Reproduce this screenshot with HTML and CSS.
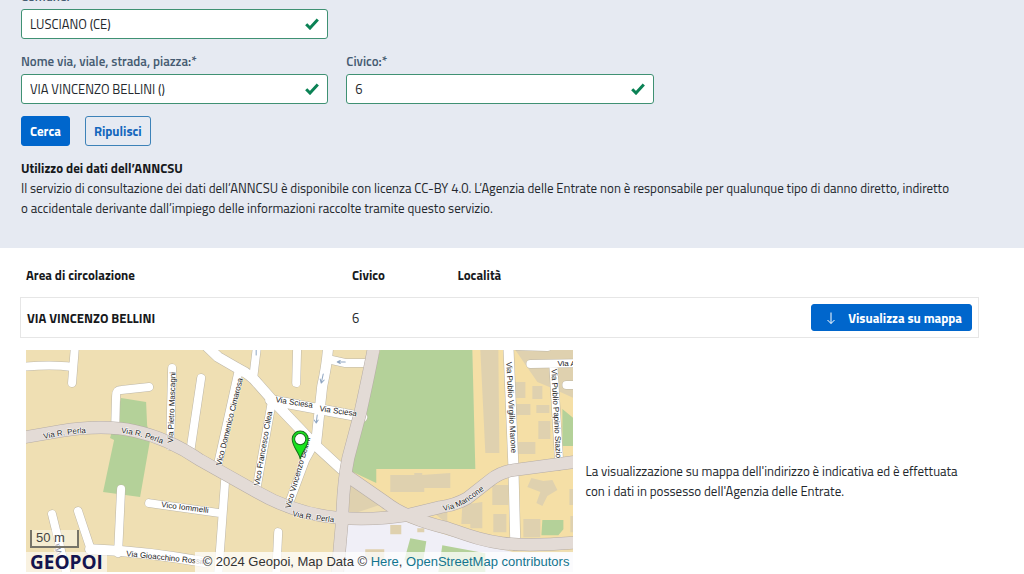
FILE: index.html
```html
<!DOCTYPE html>
<html lang="it">
<head>
<meta charset="utf-8">
<meta name="viewport" content="width=device-width, initial-scale=1">
<title>Consultazione ANNCSU</title>
<link rel="stylesheet" href="styles.css">
</head>
<body>
<section class="search">
  <form class="search-form">
    <div class="fields">
      <div class="field field-first">
        <label for="comune">Comune:*</label>
        <input id="comune" type="text" value="LUSCIANO (CE)">
        <svg class="check" viewBox="0 0 14 12" aria-hidden="true"><path d="M1.2 6.2 5 10 12.8 1.500"/></svg>
      </div>
      <div class="field">
        <label for="via">Nome via, viale, strada, piazza:*</label>
        <input id="via" type="text" value="VIA VINCENZO BELLINI ()">
        <svg class="check" viewBox="0 0 14 12" aria-hidden="true"><path d="M1.2 6.2 5 10 12.8 1.500"/></svg>
      </div>
      <div class="field">
        <label for="civico">Civico:*</label>
        <input id="civico" type="text" value="6">
        <svg class="check" viewBox="0 0 14 12" aria-hidden="true"><path d="M1.2 6.2 5 10 12.8 1.500"/></svg>
      </div>
    </div>
    <div class="actions">
      <button class="btn btn-primary" type="button">Cerca</button>
      <button class="btn btn-outline" type="button">Ripulisci</button>
    </div>
  </form>
  <h2 class="notice-title">Utilizzo dei dati dell’ANNCSU</h2>
  <p class="notice">Il servizio di consultazione dei dati dell’ANNCSU è disponibile con licenza CC-BY 4.0. L’Agenzia delle Entrate non è responsabile per qualunque tipo di danno diretto, indiretto o&nbsp;accidentale derivante dall’impiego delle informazioni raccolte tramite questo servizio.</p>
</section>

<main class="results">
  <table class="table">
    <thead>
      <tr><th class="col-area">Area di circolazione</th><th class="col-num">Civico</th><th class="col-loc">Località</th><td></td></tr>
    </thead>
    <tbody>
      <tr>
        <th scope="row">VIA VINCENZO BELLINI</th><td>6</td><td></td>
        <td class="cell-action">
          <button class="btn btn-primary btn-map" type="button">
            <svg class="arrow" viewBox="0 0 10 12" aria-hidden="true"><path d="M5 .5v11M1.5 8 5 11.5 8.5 8"/></svg>
            Visualizza su mappa
          </button>
        </td>
      </tr>
    </tbody>
  </table>

  <div class="map-row">
    <div class="map-col">
      <div class="map">
        <svg class="map-art" viewBox="26 350 547 222" role="img" aria-label="Mappa di Via Vincenzo Bellini">
          <defs>
            <g id="lanes">
              <path d="M20 367Q52 364 72 367M75 345 72 383M149 387 121 390Q116 390 116 396L115 430M172 368 170 446M201 378 190 452"/>
              <path d="M257 345 253 378M297 345 296 383M327 359 345 363 368 363M238 373 217 468M272 400 256 490M315 442 305 460 287 508"/>
              <path d="M52 514 67 575M78 511 91 550M121 489 118 553M149 503 220 513M225 480 218 575M278 532 276 575"/>
              <path d="M530 364 580 363M553 366 559 466M566 385H580M516 346 547 347"/>
            </g>
            <g id="streets">
              <path d="M200 340 218 357 237 368Q250 374 258 384L273 401 315 445 350 477M328 345Q327 364 322 386L316 442M270 400 362 417"/>
              <path d="M90 549Q145 551 205 562M508 345 513 465 515 545"/>
            </g>
            <g id="roads">
              <path d="M20 438 60 431Q104 424 135 431 168 438 200 460L257 492Q295 514 340 518 378 520 407 515L440 507Q455 505 467 498L490 480Q500 472 513 470L580 461"/>
              <path d="M374 345Q371 363 360 413L348 458Q343 482 342 519L337 575M346 475 385 502Q405 518 447 528C485 541 500 549 580 542"/>
            </g>
            <path id="perla-a" d="M44 439Q65 434 95 432"/>
            <path id="perla-b" d="M121 433Q143 435 172 448"/>
            <path id="perla-c" d="M292 516Q315 521 345 523"/>
            <path id="mancone" d="M443 511Q458 508 467 502L495 482"/>
          </defs>
          <path fill="#efdfb3" d="M26 350H573V572H26z"/>
          <path fill="#f5dfa6" d="M472 350H573V550H510L400 518 350 475V469H475z"/>
          <path fill="#b4d199" d="M380 350H472L475 469H376V483L344 468zM121 398 146 402 147 425 150 440 140 497 103 492 114 440 110 438 115 420z"/>
          <path fill="#f0eff7" d="M345 523 400 520 447 535 513 552H573V572H340z"/>
          <path fill="#dfd1af" d="M350 478 385 503 352 514 347 510zM480 350H498L499 453H485zM515 350H573V398L549 387 537 382zM514 382H525V398H514zM532 386H542V399H532zM516 404H530V415H516zM536 405H549V413H536zM538 421H550V439H538zM517 442H535V454H517zM390 475H414V473H422V475L450 473V488H424V492H390zM492 485H508V505H492zM493 514H506V532H493zM462 505 482 502V528H470V524H461zM523 519H540V537H523zM531 478 543 481 552 480 557 490 547 496 542 506 536 503 540 492 527 487zM569 489H573V505H569zM570 516H573V532H570zM435 514 447 512V524zM390 525H401V534H390zM417 528H424V532H417zM365 549H384V560H365zM538 350H565V360H538z"/>
          <path fill="#b4d199" d="M562 409 573 418V446H562zM542 520H563V529L558 535H541zM410 538 426 541 423 560H404zM442 545 485 553V572H438z"/>
          <g class="street-shape">
            <use href="#lanes" class="lane-edge"/><use href="#streets" class="street-edge"/>
            <use href="#lanes" class="lane-fill"/><use href="#streets" class="street-fill"/>
            <use href="#roads" class="road-edge"/><use href="#roads" class="road-fill"/>
            <path class="direction" d="M337 362H345M337 362 340 360.500M337 362 340 363.500M323 374 321 383M321 383 320 379M321 383 324 380M317 415 316 423M316 423 314 420M316 423 318 420M256 350V355"/>
          </g>
          <g class="map-label">
            <text><textPath href="#perla-a">Via R. Perla</textPath></text>
            <text><textPath href="#perla-b">Via R. Perla</textPath></text>
            <text><textPath href="#perla-c">Via R. Perla</textPath></text>
            <text><textPath href="#mancone">Via Mancone</textPath></text>
            <text transform="translate(173 443)rotate(-88)">Via Pietro Mascagni</text>
            <text transform="translate(221 466)rotate(-76)">Vico Domenico Cimarosa</text>
            <text transform="translate(259 486)rotate(-80)">Vico Francesco Cilea</text>
            <text transform="translate(290 509)rotate(-74)">Vico Vincenzo Bellini</text>
            <text transform="translate(275 402)rotate(9)">Via Sciesa</text>
            <text transform="translate(319 411)rotate(8)">Via Sciesa</text>
            <text transform="translate(506 362)rotate(87)">Via Publio Virgilio Marone</text>
            <text transform="translate(551 369)rotate(87)">Via Publio Papinio Stazio</text>
            <text transform="translate(557 366)">Via A</text>
            <text transform="translate(161 507)rotate(7)">Vico Iommelli</text>
            <text transform="translate(126 556)rotate(6)">Via Gioacchino Rossini</text>
            <text transform="translate(62 554)rotate(-105)" class="faint-label">Via</text>
          </g>
          <path fill="#19e51e" stroke="#16701b" d="M300 459C299 452 292 447 292 439A8 8 0 0 1 308 439C308 447 301 452 300 459z"/>
          <circle cx="300" cy="439" r="5.600" fill="#fff" stroke="#16701b"/>
        </svg>
        <div class="scale">50 m</div>
        <div class="brand">GEOPOI</div>
        <div class="credits">© 2024 Geopoi, Map Data © <a href="#here">Here</a>, <a href="#osm">OpenStreetMap contributors</a></div>
      </div>
    </div>
    <p class="map-note">La visualizzazione su mappa dell'indirizzo è indicativa ed è effettuata con i dati in possesso dell'Agenzia delle Entrate.</p>
  </div>
</main>
</body>
</html>
```
FILE: styles.css
```css
* { box-sizing: border-box; }
body {
  margin: 0;
  background: #fff;
  color: #24282d;
  font: 13px/20px "Titillium Web", Roboto, sans-serif;
  overflow: hidden;
}
.search {
  margin-top: -14px;
  padding: 0 45px 30px 21px;
  background: #e6eaf2;
}
.fields {
  display: grid;
  grid-template-columns: repeat(3, 1fr);
  gap: 12px 18px;
}
.field {
  position: relative;
  display: grid;
  gap: 3px;
}
.field-first { grid-column: 1; }
.field-first + .field { grid-column: 1; }
.field label { color: #455b71; font-weight: 600; }
.field input {
  width: 100%;
  height: 30px;
  padding: 0 32px 0 8px;
  border: 1px solid #3f9173;
  border-radius: 3px;
  background: #fff;
  color: #24282d;
  font: inherit;
}
.check {
  position: absolute;
  right: 9px;
  bottom: 9px;
  width: 14px;
  height: 12px;
  fill: none;
  stroke: #0b8255;
  stroke-width: 3;
}
.actions { display: flex; gap: 15px; margin-top: 12px; }
.btn {
  height: 30px;
  padding: 0 8px;
  border: 1px solid #0066cc;
  border-radius: 3px;
  font: inherit;
  font-weight: 700;
}
.btn-primary { background: #0066cc; color: #fff; }
.btn-outline { background: transparent; border-color: #3d82b8; color: #1467bd; }
.notice-title { margin: 12px 0 0; color: #17191c; font: inherit; font-weight: 700; }
.notice { margin: 0; }

.results { padding: 11px 45px 0 20px; }
.table {
  width: 100%;
  table-layout: fixed;
  border-collapse: separate;
  border-spacing: 0;
}
.table th, .table td { padding: 6px; text-align: left; }
.table th { color: #17191c; font-weight: 700; }
.table thead th { padding-bottom: 12px; }
.col-area { width: 34%; }
.col-num { width: 11%; }
.col-loc { width: 14%; }
.table tbody th, .table tbody td { border: solid #e6e6e6; border-width: 1px 0; }
.table tbody th { border-left-width: 1px; }
.table tbody td:last-child { border-right-width: 1px; }
.table .cell-action { text-align: right; }
.btn-map {
  display: inline-flex;
  align-items: center;
  gap: 12px;
  height: 27px;
  padding: 0 9px 0 14px;
  vertical-align: top;
}
.arrow { width: 10px; height: 12px; fill: none; stroke: #fff; }

.map-row {
  display: grid;
  grid-template-columns: 7fr 5fr;
  align-items: center;
  margin-top: 12px;
}
.map-col, .map-note { padding: 0 6px; }
.map-note { margin: 40px 0 0; }
.map {
  position: relative;
  overflow: hidden;
  font-family: "Liberation Sans", Arial, sans-serif;
}
.map-art { display: block; width: 100%; }
.street-shape { fill: none; stroke-linecap: round; stroke-linejoin: round; }
.lane-edge { stroke: #bdb7a8; stroke-width: 9px; }
.lane-fill { stroke: #fff; stroke-width: 8px; }
.street-edge { stroke: #bdb7a8; stroke-width: 11px; }
.street-fill { stroke: #fff; stroke-width: 10px; }
.road-edge { stroke: #b5aca6; stroke-width: 13px; }
.road-fill { stroke: #e3dbd6; stroke-width: 12px; }
.direction { stroke: #8fa6c2; stroke-width: 1px; }
.map-label { fill: #222; stroke: #fff; stroke-width: 1px; paint-order: stroke; font-size: 8px; }
.faint-label { fill: #667; }
.scale {
  position: absolute;
  left: 4px;
  bottom: 24px;
  width: 49px;
  height: 18px;
  padding-left: 4px;
  border: 2px solid #777469;
  border-top: 0;
  background: rgb(255 255 255 / 40%);
  color: #444;
  font-size: 13px;
  line-height: 16px;
}
.brand {
  position: absolute;
  left: 0;
  bottom: 0;
  padding: 0 4px;
  background: rgb(255 255 255 / 60%);
  color: #14144f;
  font: 700 19px/20px "Open Sans", sans-serif;
}
.credits {
  position: absolute;
  right: 0;
  bottom: 0;
  padding: 0 4px 0 8px;
  background: rgb(255 255 255 / 75%);
  color: #333;
  font-size: 13px;
  line-height: 20px;
  white-space: nowrap;
}
.credits a { color: #13758f; text-decoration: none; }
```
